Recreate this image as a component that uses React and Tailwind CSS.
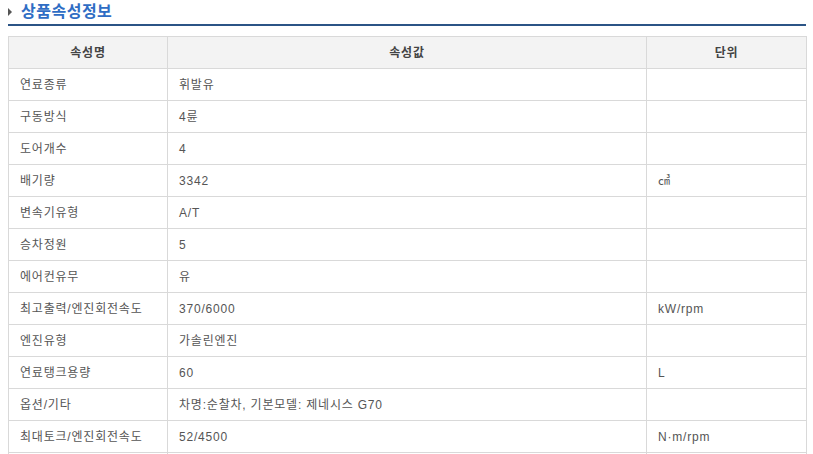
import React from 'react';

const rows = [
  ['연료종류', '휘발유', ''],
  ['구동방식', '4륜', ''],
  ['도어개수', '4', ''],
  ['배기량', '3342', '㎤'],
  ['변속기유형', 'A/T', ''],
  ['승차정원', '5', ''],
  ['에어컨유무', '유', ''],
  ['최고출력/엔진회전속도', '370/6000', 'kW/rpm'],
  ['엔진유형', '가솔린엔진', ''],
  ['연료탱크용량', '60', 'L'],
  ['옵션/기타', '차명:순찰차, 기본모델: 제네시스 G70', ''],
  ['최대토크/엔진회전속도', '52/4500', 'N·m/rpm'],
  ['', '', ''],
];

export default function App() {
  return (
    <div
      className="w-[813px] h-[454px] overflow-hidden bg-white pl-[8px]"
      style={{ fontFamily: '"Liberation Sans", "Noto Sans CJK KR", sans-serif' }}
    >
      <div className="w-[798px]">
        {/* Title */}
        <div className="flex items-center h-[26px] border-b-2 border-[#2b5486]">
          <span className="w-0 h-0 border-y-[4px] border-y-transparent border-l-[4px] border-l-[#555] mr-[9px]" />
          <h2 className="text-[16px] font-bold text-[#2f6dc4] leading-none tracking-[0.5px] -mt-[1px]">상품속성정보</h2>
        </div>

        {/* Table */}
        <table className="mt-[10px] w-[798px] table-fixed border-collapse text-[12px] tracking-[0.8px]">
          <colgroup>
            <col className="w-[159px]" />
            <col className="w-[479px]" />
            <col className="w-[160px]" />
          </colgroup>
          <thead>
            <tr className="h-[32px] bg-[#f3f3f3]">
              <th className="border border-[#d9d9d9] font-bold text-[#444] text-center">속성명</th>
              <th className="border border-[#d9d9d9] font-bold text-[#444] text-center">속성값</th>
              <th className="border border-[#d9d9d9] font-bold text-[#444] text-center">단위</th>
            </tr>
          </thead>
          <tbody>
            {rows.map((r, i) => (
              <tr key={i} className="h-[32px]">
                {r.map((c, j) => (
                  <td key={j} className="border border-[#d9d9d9] pl-[11px] text-[#555] leading-none">
                    {c}
                  </td>
                ))}
              </tr>
            ))}
          </tbody>
        </table>
      </div>
    </div>
  );
}
